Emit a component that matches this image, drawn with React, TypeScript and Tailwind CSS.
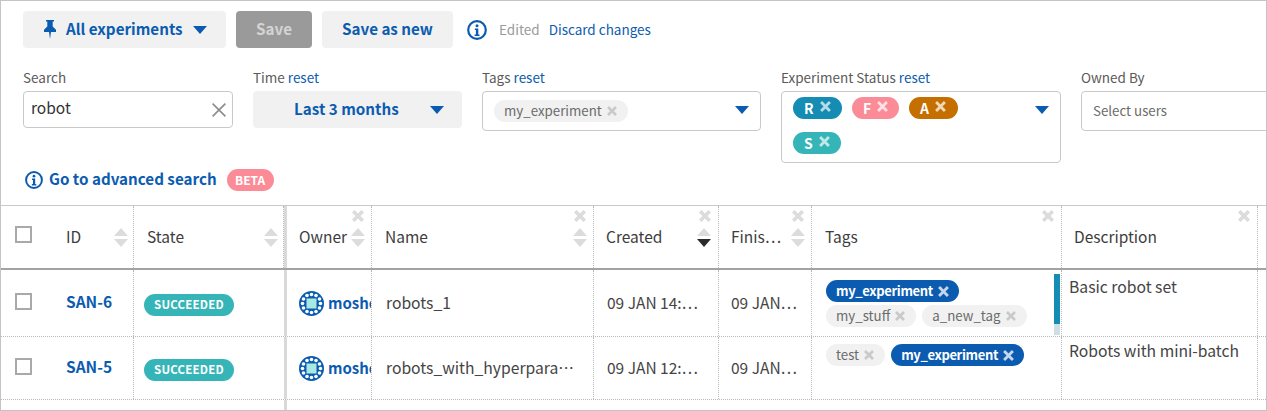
import React from "react";

const BLUE = "#0b5cb0";

const Caret = ({ className = "" }: { className?: string }) => (
  <svg width="14" height="8" viewBox="0 0 14 8" className={`shrink-0 ${className}`}><path d="M0 0h14L7 8z" fill={BLUE} /></svg>
);

const XMark = ({ size = 10, color = "#c9c9c9", sw = 2.6 }: { size?: number; color?: string; sw?: number }) => (
  <svg width={size} height={size} viewBox="0 0 10 10" className="shrink-0"><path d="M1 1l8 8M9 1l-8 8" stroke={color} strokeWidth={sw} /></svg>
);

const Sort = ({ active = false }: { active?: boolean }) => (
  <svg width="14" height="19" viewBox="0 0 14 19" className="shrink-0">
    <path d="M7 0l7 8H0z" fill="#dcdcdc" />
    <path d="M0 11h14l-7 8z" fill={active ? "#2b2b2b" : "#dcdcdc"} />
  </svg>
);

const Pin = () => (
  <svg width="14" height="19" viewBox="0 0 14 19" className="shrink-0">
    <path d="M3 0h8v1.6h-1.3v5l3.3 3.2v2.2H1V9.800l3.300-3.200v-5H3z" fill={BLUE} />
    <path d="M6 12h2l-1 7z" fill={BLUE} />
  </svg>
);

const InfoIcon = ({ size }: { size: number }) => (
  <svg width={size} height={size} viewBox="0 0 20 20" className="shrink-0">
    <circle cx="10" cy="10" r="8.800" fill="none" stroke={BLUE} strokeWidth="2.200" />
    <circle cx="10" cy="5.800" r="1.500" fill={BLUE} />
    <path d="M7.800 8.400h3.500v6h1.200V16H7.600v-1.600h1.300V10H7.800z" fill={BLUE} />
  </svg>
);

const Avatar = () => {
  const dots = [
    [8, 4.500], [12.5, 3.500], [17, 4.500],
    [8, 20.500], [12.5, 21.500], [17, 20.500],
    [4.500, 8], [3.500, 12.5], [4.500, 17],
    [20.500, 8], [21.500, 12.5], [20.500, 17],
  ];
  return (
    <svg width="25" height="25" viewBox="0 0 25 25" className="shrink-0">
      <circle cx="12.5" cy="12.5" r="12.5" fill={BLUE} />
      {dots.map(([x, y], i) => <circle key={i} cx={x} cy={y} r="1.800" fill="#fff" />)}
      <rect x="7.500" y="7.500" width="10" height="10" fill="#a9e9e1" />
    </svg>
  );
};

const Label = ({ title, reset }: { title: string; reset?: boolean }) => (
  <div className="h-[23px] text-[13.5px] leading-[19px] text-[#5a5a5a] whitespace-nowrap">
    {title}{reset && <span className="text-[#0b5cb0]"> reset</span>}
  </div>
);

const GreyTag = ({ text }: { text: string }) => (
  <span className="inline-flex items-center gap-[5px] h-[22px] pl-[10px] pr-[11px] rounded-full bg-[#f1f1f1] text-[13.3px] text-[#6b6b6b] whitespace-nowrap">
    <span className="-mt-[1px]">{text}</span><XMark size={10} />
  </span>
);

const BlueTag = ({ text }: { text: string }) => (
  <span className="inline-flex items-center gap-[5px] h-[22px] pl-[10px] pr-[10px] rounded-full bg-[#0b5cb0] text-[13px] font-semibold tracking-[-0.35px] text-white whitespace-nowrap">
    <span className="-mt-[1px]">{text}</span><XMark size={11} color="#c5d6ea" />
  </span>
);

const StatusPill = ({ letter, cls, x, w }: { letter: string; cls: string; x: string; w: string }) => (
  <span className={`inline-flex items-center gap-[6px] h-[22px] pl-[11px] rounded-full text-[14px] font-bold text-white ${w} ${cls}`}>
    {letter}<span className="-mt-[4px]"><XMark size={11} color={x} /></span>
  </span>
);

const gridCols = "grid grid-cols-[53px_80px_150px_3px_85px_222px_125px_93px_250px_196px_1fr]";
const dotted = "border-r border-dotted border-[#b9b9b9]";

const HeadCell = ({ title, close, sort, active, cls = "" }: { title: string; close?: boolean; sort?: boolean; active?: boolean; cls?: string }) => (
  <div className={`relative flex items-center justify-between ${dotted} ${cls}`}>
    <span className="text-[15.5px] text-[#3d3d3d] whitespace-nowrap">{title}</span>
    {close && <span className="absolute right-[7px] top-[4px]"><XMark size={12} color="#dcdcdc" sw={3} /></span>}
    {sort && <Sort active={active} />}
  </div>
);

const Badge = () => (
  <span className="inline-flex items-center justify-center w-[90px] h-[22px] mt-[3px] rounded-full bg-[#36b5b8] text-[11.5px] font-bold tracking-[0.2px] text-white">SUCCEEDED</span>
);

const Checkbox = () => <span className="block w-[17px] h-[17px] border-2 border-[#a9a9a9] bg-white" />;

const Cell = ({ children, cls = "" }: { children?: React.ReactNode; cls?: string }) => (
  <div className={`overflow-hidden ${dotted} ${cls}`}>{children}</div>
);

const Row = ({ h, id, name, created, fin, desc, tags, bar, descPad }: { h: string; id: string; name: string; created: string; fin: string; desc: string; tags: React.ReactNode; bar?: boolean; descPad: string }) => (
  <div className={`${gridCols} ${h} border-b border-dotted border-[#b9b9b9]`}>
    <div className="flex items-center pl-[14px] pb-[4px]"><Checkbox /></div>
    <Cell cls="flex items-center pl-[12px] pb-[2px] text-[15.5px] font-semibold text-[#0b5cb0]">{id}</Cell>
    <div className="flex items-center pl-[10px]"><Badge /></div>
    <div className="bg-[#d9d9d9]" />
    <Cell cls="flex items-center gap-[4px] pl-[12px] text-[15px] font-semibold text-[#0b5cb0]"><Avatar /><span>moshe</span></Cell>
    <Cell cls="flex items-center pl-[14px] pr-[15px]"><span className="truncate text-[15.7px] text-[#444]">{name}</span></Cell>
    <Cell cls="flex items-center pl-[13px] text-[15.5px] text-[#444] whitespace-nowrap">{created}</Cell>
    <Cell cls="flex items-center pl-[12px] text-[15.5px] text-[#444] whitespace-nowrap">{fin}</Cell>
    <Cell cls="relative pl-[14px]">
      {tags}
      {bar && (
        <div className="absolute right-[1px] top-[4px] w-[6px] h-[61px] flex flex-col">
          <div className="h-[50px] bg-[#148cb3]" />
          <div className="flex-1 bg-[#cfdde6]" />
        </div>
      )}
    </Cell>
    <Cell cls={`pl-[7px] text-[15.7px] leading-[24px] text-[#444] whitespace-nowrap ${descPad}`}>{desc}</Cell>
    <div />
  </div>
);

export default function App() {
  return (
    <div className="w-[1267px] h-[411px] overflow-hidden bg-white border border-[#c4c4c4] font-['Noto_Sans_CJK_SC','Noto_Sans',sans-serif]">
      <div className="flex items-center h-[37px] mt-[10px] ml-[22px]">
        <button className="flex items-center w-[203px] h-[37px] rounded-[4px] bg-[#f1f1f1] pl-[20px] text-[#0b5cb0]">
          <Pin />
          <span className="ml-[9px] pb-[3px] text-[15.2px] font-semibold whitespace-nowrap">All experiments</span>
          <Caret className="ml-[10px]" />
        </button>
        <button className="ml-[10px] pb-[3px] w-[76px] h-[37px] rounded-[4px] bg-[#9a9a9a] text-[15.2px] font-semibold text-[#d4d4d4]">Save</button>
        <button className="ml-[10px] pb-[3px] w-[131px] h-[37px] rounded-[4px] bg-[#f1f1f1] text-[15.2px] font-semibold text-[#0b5cb0]">Save as new</button>
        <span className="ml-[14px]"><InfoIcon size={20} /></span>
        <span className="ml-[12px] text-[13.5px] text-[#9a9a9a]">Edited</span>
        <span className="ml-[9px] text-[13.5px] text-[#0b5cb0]">Discard changes</span>
      </div>

      <div className="flex items-start mt-[20px] ml-[22px] h-[100px]">
        <div className="w-[210px] shrink-0">
          <Label title="Search" />
          <div className="flex items-center justify-between h-[37px] border border-[#c9c9c9] rounded-[4px] pl-[7px] pr-[5px] text-[15.5px] text-[#333]">
            <span className="pb-[3px]">robot</span>
            <XMark size={16} color="#8c8c8c" sw={1} />
          </div>
        </div>
        <div className="w-[209px] ml-[20px] shrink-0">
          <Label title="Time" reset />
          <div className="flex items-center h-[37px] rounded-[4px] bg-[#f1f1f1] pl-[41px] text-[15.2px] font-semibold text-[#0b5cb0]">
            <span className="whitespace-nowrap pb-[3px]">Last 3 months</span>
            <Caret className="ml-[31px]" />
          </div>
        </div>
        <div className="w-[279px] ml-[20px] shrink-0">
          <Label title="Tags" reset />
          <div className="flex items-center justify-between h-[40px] border border-[#c9c9c9] rounded-[4px] pl-[11px] pr-[11px]">
            <GreyTag text="my_experiment" />
            <Caret className="-mt-[3px]" />
          </div>
        </div>
        <div className="w-[280px] ml-[20px] shrink-0">
          <Label title="Experiment Status" reset />
          <div className="flex items-start justify-between h-[72px] border border-[#c9c9c9] rounded-[4px] pl-[11px] pr-[11px] pt-[5px]">
            <div className="flex flex-wrap gap-x-[10px] gap-y-[13px] w-[200px]">
              <StatusPill letter="R" cls="bg-[#148cb3]" x="#b5dbe6" w="w-[49px]" />
              <StatusPill letter="F" cls="bg-[#fb8b96]" x="#fde0e3" w="w-[47px]" />
              <StatusPill letter="A" cls="bg-[#c46f00]" x="#f0d8b8" w="w-[49px]" />
              <StatusPill letter="S" cls="bg-[#36b5b8]" x="#c0e8e9" w="w-[48px]" />
            </div>
            <Caret className="mt-[9px]" />
          </div>
        </div>
        <div className="w-[220px] ml-[20px] shrink-0">
          <Label title="Owned By" />
          <div className="flex items-center h-[40px] border border-[#c9c9c9] rounded-[4px] pl-[11px] text-[13.3px] text-[#6b6b6b] whitespace-nowrap">Select users</div>
        </div>
      </div>

      <div className="flex items-center h-[23px] ml-[24px]">
        <InfoIcon size={18} />
        <span className="ml-[6px] pb-[2px] text-[15.2px] font-semibold text-[#0b5cb0] whitespace-nowrap">Go to advanced search</span>
        <span className="ml-[10px] inline-flex items-center justify-center w-[47px] h-[22px] rounded-full bg-[#fb8b96] text-[12px] font-bold text-white">BETA</span>
      </div>

      <div className="mt-[14px] border-t border-[#c9c9c9]">
        <div className={`${gridCols} h-[64px] border-b-2 border-[#a3a3a3]`}>
          <div className="flex items-center pl-[14px] pb-[6px]"><Checkbox /></div>
          <HeadCell title="ID" sort cls="pl-[12px] pr-[5px]" />
          <HeadCell title="State" sort cls="pl-[13px] pr-[5px]" />
          <div className="bg-[#d9d9d9]" />
          <HeadCell title="Owner" sort close cls="pl-[12px] pr-[6px]" />
          <HeadCell title="Name" sort close cls="pl-[13px] pr-[6px]" />
          <HeadCell title="Created" sort active close cls="pl-[12px] pr-[7px]" />
          <HeadCell title="Finis…" sort close cls="pl-[12px] pr-[6px]" />
          <HeadCell title="Tags" close cls="pl-[13px]" />
          <HeadCell title="Description" close cls="pl-[12px]" />
          <div />
        </div>
        <Row
          h="h-[67px]"
          id="SAN-6"
          name="robots_1"
          created="09 JAN 14:…"
          fin="09 JAN…"
          desc="Basic robot set"
          bar
          descPad="pt-[5px]"
          tags={
            <div className="flex flex-wrap gap-x-[6px] gap-y-[3px] pt-[10px] pr-[20px]">
              <div className="w-full flex"><BlueTag text="my_experiment" /></div>
              <GreyTag text="my_stuff" />
              <GreyTag text="a_new_tag" />
            </div>
          }
        />
        <Row
          h="h-[63px]"
          id="SAN-5"
          name="robots_with_hyperparameters"
          created="09 JAN 12:…"
          fin="09 JAN…"
          desc="Robots with mini-batch"
          descPad="pt-[2px]"
          tags={
            <div className="flex flex-wrap gap-x-[6px] pt-[7px]">
              <GreyTag text="test" />
              <BlueTag text="my_experiment" />
            </div>
          }
        />
        <div className={`${gridCols} h-[11px]`}>
          <div /><div /><div />
          <div className="bg-[#d9d9d9]" />
        </div>
      </div>
    </div>
  );
}
